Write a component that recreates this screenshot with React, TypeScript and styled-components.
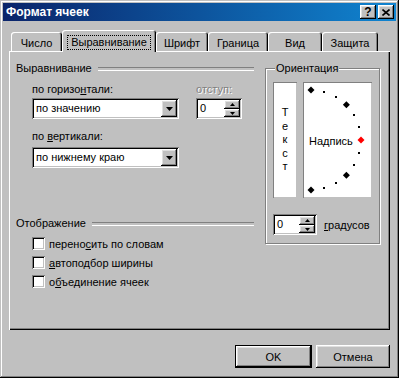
import React from 'react';
import styled, { createGlobalStyle, css } from 'styled-components';

const GlobalStyle = createGlobalStyle`
    html, body {
        margin: 0;
        padding: 0;
        background: #c0c0c0;
    }
    body {
        font-family: 'Liberation Sans', Arial, sans-serif;
        font-size: 11px;
        color: #000;
    }
    * {
        box-sizing: border-box;
    }
`;

const raised = css`
    box-shadow: inset -1px -1px #000, inset 1px 1px #fff, inset -2px -2px #808080, inset 2px 2px #dfdfdf;
`;

const sunken = css`
    box-shadow: inset 1px 1px #808080, inset -1px -1px #fff, inset 2px 2px #000, inset -2px -2px #c0c0c0;
`;

const Window = styled.div`
    width: 399px;
    height: 378px;
    padding: 3px;
    display: flex;
    flex-direction: column;
    background: #c0c0c0;
    box-shadow: inset -1px -1px #000, inset 1px 1px #c0c0c0, inset -2px -2px #808080, inset 2px 2px #fff;
`;

const TitleBar = styled.div`
    height: 18px;
    display: flex;
    align-items: center;
    padding: 0 2px 0 3px;
    background: linear-gradient(90deg, #0a246a, #1084d0);
`;

const Title = styled.span`
    flex: 1;
    color: #fff;
    font-weight: bold;
    font-size: 12px;
`;

const TitleButton = styled.div`
    width: 16px;
    height: 14px;
    display: flex;
    align-items: center;
    justify-content: center;
    background: #c0c0c0;
    font-weight: bold;
    font-size: 12px;
    line-height: 14px;
    ${raised};

    & + & {
        margin-left: 2px;
    }
`;

const Body = styled.div`
    flex: 1;
    display: flex;
    flex-direction: column;
    padding: 9px 6px 7px;
`;

const TabStrip = styled.div`
    display: flex;
    align-items: flex-end;
    height: 21px;
    padding-left: 2px;
`;

const Tab = styled.div<{ $w: number; $active?: boolean }>`
    position: relative;
    z-index: ${(p) => (p.$active ? 1 : 0)};
    width: ${(p) => p.$w}px;
    height: ${(p) => (p.$active ? 22 : 19)}px;
    margin-bottom: ${(p) => (p.$active ? -1 : 0)}px;
    padding-top: 2px;
    display: flex;
    align-items: center;
    justify-content: center;
    background: #c0c0c0;
    border-radius: 3px 3px 0 0;
    box-shadow: inset 1px 1px #fff, inset -1px 0 #000, inset -2px 0 #808080;
`;

const Focus = styled.span`
    padding: 0 3px;
    line-height: 13px;
    outline: 1px dotted #000;
`;

const Panel = styled.div`
    height: 279px;
    display: flex;
    align-items: flex-start;
    padding: 11px 0 0 7px;
    background: #c0c0c0;
    box-shadow: inset 1px 1px #fff, inset -1px -1px #000, inset -2px -2px #808080;
`;

const LeftColumn = styled.div`
    width: 238px;
    display: flex;
    flex-direction: column;
`;

const SectionHeader = styled.div<{ $top?: number }>`
    display: flex;
    align-items: center;
    height: 13px;
    line-height: 13px;
    margin-top: ${(p) => p.$top ?? 0}px;

    &::after {
        content: '';
        flex: 1;
        height: 2px;
        margin-left: 6px;
        border-top: 1px solid #808080;
        border-bottom: 1px solid #fff;
    }
`;

const FieldRow = styled.div<{ $top: number }>`
    display: flex;
    padding-left: 16px;
    margin-top: ${(p) => p.$top}px;
    gap: 17px;
`;

const Field = styled.div`
    display: flex;
    flex-direction: column;
    gap: 2px;
`;

const Label = styled.div<{ $disabled?: boolean; $top?: number }>`
    height: 13px;
    line-height: 13px;
    white-space: nowrap;
    margin-top: ${(p) => p.$top ?? 0}px;
    color: ${(p) => (p.$disabled ? '#808080' : '#000')};
    text-shadow: ${(p) => (p.$disabled ? '1px 1px 0 #fff' : 'none')};
`;

const Combo = styled.div<{ $top?: number }>`
    width: 147px;
    height: 21px;
    display: flex;
    align-items: stretch;
    padding: 2px;
    margin-top: ${(p) => p.$top ?? 0}px;
    background: #fff;
    ${sunken};
`;

const FieldValue = styled.span`
    flex: 1;
    padding-left: 2px;
    line-height: 17px;
    white-space: nowrap;
`;

const ArrowButton = styled.div<{ $h?: number }>`
    width: 16px;
    height: ${(p) => p.$h ?? 17}px;
    display: flex;
    align-items: center;
    justify-content: center;
    background: #c0c0c0;
    ${raised};
`;

const Spin = styled.div<{ $w: number }>`
    width: ${(p) => p.$w}px;
    height: 21px;
    display: flex;
    padding: 2px;
    background: #fff;
    ${sunken};
`;

const SpinButtons = styled.div`
    display: flex;
    flex-direction: column;
`;

const CheckRow = styled.div`
    height: 19px;
    display: flex;
    align-items: center;
    gap: 4px;
    padding-left: 16px;
`;

const CheckList = styled.div`
    display: flex;
    flex-direction: column;
    margin-top: 4px;
`;

const CheckBox = styled.div`
    width: 13px;
    height: 13px;
    background: #fff;
    ${sunken};
`;

const GroupBox = styled.fieldset`
    margin: 0 0 0 11px;
    padding: 7px 7px 8px;
    width: 115px;
    height: 182px;
    min-inline-size: 0;
    border: 1px solid #808080;
    box-shadow: 1px 1px 0 #fff, inset 1px 1px 0 #fff;
`;

const Legend = styled.legend`
    margin-left: 2px;
    padding: 0 1px;
    line-height: 13px;
    background: #c0c0c0;
`;

const OrientRow = styled.div`
    display: flex;
    gap: 6px;
    height: 116px;
`;

const VerticalText = styled.div`
    width: 24px;
    display: flex;
    flex-direction: column;
    align-items: center;
    justify-content: center;
    background: #fff;
    box-shadow: inset 1px 1px #808080, inset -1px -1px #c0c0c0;

    span {
        line-height: 13.5px;
    }
`;

const Dial = styled.div`
    position: relative;
    width: 69px;
    display: flex;
    align-items: center;
    padding: 2px 0 0 6px;
    background: #fff;
    box-shadow: inset 1px 1px #808080, inset -1px -1px #c0c0c0;

    svg {
        position: absolute;
        inset: 0;
    }
`;

const DialLabel = styled.span`
    position: relative;
`;

const DegreeRow = styled.div`
    display: flex;
    align-items: center;
    gap: 7px;
    margin-top: 16px;
`;

const Footer = styled.div`
    display: flex;
    justify-content: flex-end;
    gap: 4px;
    margin-top: 15px;
`;

const Button = styled.div<{ $default?: boolean; $w: number }>`
    width: ${(p) => p.$w}px;
    height: 23px;
    display: flex;
    align-items: center;
    justify-content: center;
    background: #c0c0c0;
    ${(p) =>
        p.$default
            ? css`
                  border: 1px solid #000;
                  ${raised};
              `
            : raised};
`;

function DownArrow() {
    return (
        <svg width="7" height="4" viewBox="0 0 7 4">
            <path d="M0 0h7L3.5 4z" fill="#000" />
        </svg>
    );
}

function SpinArrow({ up }: { up?: boolean }) {
    return (
        <svg width="5" height="3" viewBox="0 0 5 3">
            <path d={up ? 'M2.5 0L5 3H0z' : 'M0 0h5L2.5 3z'} fill="#000" />
        </svg>
    );
}

function CloseGlyph() {
    return (
        <svg width="8" height="7" viewBox="0 0 8 7">
            <path d="M0.5 0.5L7.5 6.5M7.5 0.5L0.5 6.5" stroke="#000" strokeWidth="1.6" />
        </svg>
    );
}

function SpinBox({ w, value }: { w: number; value: string }) {
    return (
        <Spin $w={w}>
            <FieldValue>{value}</FieldValue>
            <SpinButtons>
                <ArrowButton $h={9}>
                    <SpinArrow up />
                </ArrowButton>
                <ArrowButton $h={8}>
                    <SpinArrow />
                </ArrowButton>
            </SpinButtons>
        </Spin>
    );
}

function DialDrawing() {
    const cx = 8;
    const cy = 58;
    const r = 50;
    const marks = [];
    for (let a = 90; a >= -90; a -= 15) {
        const rad = (a * Math.PI) / 180;
        const x = cx + r * Math.cos(rad);
        const y = cy - r * Math.sin(rad);
        if (a % 45 === 0) {
            marks.push(
                <path
                    key={a}
                    d={`M${x} ${y - 3.5}L${x + 3.5} ${y}L${x} ${y + 3.5}L${x - 3.5} ${y}z`}
                    fill={a === 0 ? '#ff0000' : '#000'}
                />
            );
        } else {
            marks.push(<rect key={a} x={Math.round(x) - 1} y={Math.round(y) - 1} width="2" height="2" fill="#000" />);
        }
    }
    return (
        <svg width="69" height="116" viewBox="0 0 69 116">
            {marks}
        </svg>
    );
}

const tabs = [
    { label: 'Число', w: 51 },
    { label: 'Выравнивание', w: 94, active: true },
    { label: 'Шрифт', w: 52 },
    { label: 'Граница', w: 60 },
    { label: 'Вид', w: 54 },
    { label: 'Защита', w: 56 },
];

export default function App() {
    return (
        <>
            <GlobalStyle />
            <Window>
                <TitleBar>
                    <Title>Формат ячеек</Title>
                    <TitleButton>?</TitleButton>
                    <TitleButton>
                        <CloseGlyph />
                    </TitleButton>
                </TitleBar>
                <Body>
                    <TabStrip>
                        {tabs.map((t) => (
                            <Tab key={t.label} $w={t.w} $active={t.active}>
                                {t.active ? <Focus>{t.label}</Focus> : t.label}
                            </Tab>
                        ))}
                    </TabStrip>
                    <Panel>
                        <LeftColumn>
                            <SectionHeader>Выравнивание</SectionHeader>
                            <FieldRow $top={8}>
                                <Field>
                                    <Label>
                                        по горизо<u>н</u>тали:
                                    </Label>
                                    <Combo>
                                        <FieldValue>по значению</FieldValue>
                                        <ArrowButton>
                                            <DownArrow />
                                        </ArrowButton>
                                    </Combo>
                                    <Label $top={9}>
                                        по <u>в</u>ертикали:
                                    </Label>
                                    <Combo $top={2}>
                                        <FieldValue>по нижнему краю</FieldValue>
                                        <ArrowButton>
                                            <DownArrow />
                                        </ArrowButton>
                                    </Combo>
                                </Field>
                                <Field>
                                    <Label $disabled>отступ:</Label>
                                    <SpinBox w={46} value="0" />
                                </Field>
                            </FieldRow>
                            <SectionHeader $top={49}>Отображение</SectionHeader>
                            <CheckList>
                                <CheckRow>
                                    <CheckBox />
                                    <span>
                                        перено<u>с</u>ить по словам
                                    </span>
                                </CheckRow>
                                <CheckRow>
                                    <CheckBox />
                                    <span>
                                        <u>а</u>втоподбор ширины
                                    </span>
                                </CheckRow>
                                <CheckRow>
                                    <CheckBox />
                                    <span>
                                        о<u>б</u>ъединение ячеек
                                    </span>
                                </CheckRow>
                            </CheckList>
                        </LeftColumn>
                        <GroupBox>
                            <Legend>Ориентация</Legend>
                            <OrientRow>
                                <VerticalText>
                                    {'Текст'.split('').map((c, i) => (
                                        <span key={i}>{c}</span>
                                    ))}
                                </VerticalText>
                                <Dial>
                                    <DialDrawing />
                                    <DialLabel>Надпись</DialLabel>
                                </Dial>
                            </OrientRow>
                            <DegreeRow>
                                <SpinBox w={44} value="0" />
                                <span>
                                    <u>г</u>радусов
                                </span>
                            </DegreeRow>
                        </GroupBox>
                    </Panel>
                    <Footer>
                        <Button $default $w={77}>
                            OK
                        </Button>
                        <Button $w={74}>Отмена</Button>
                    </Footer>
                </Body>
            </Window>
        </>
    );
}
